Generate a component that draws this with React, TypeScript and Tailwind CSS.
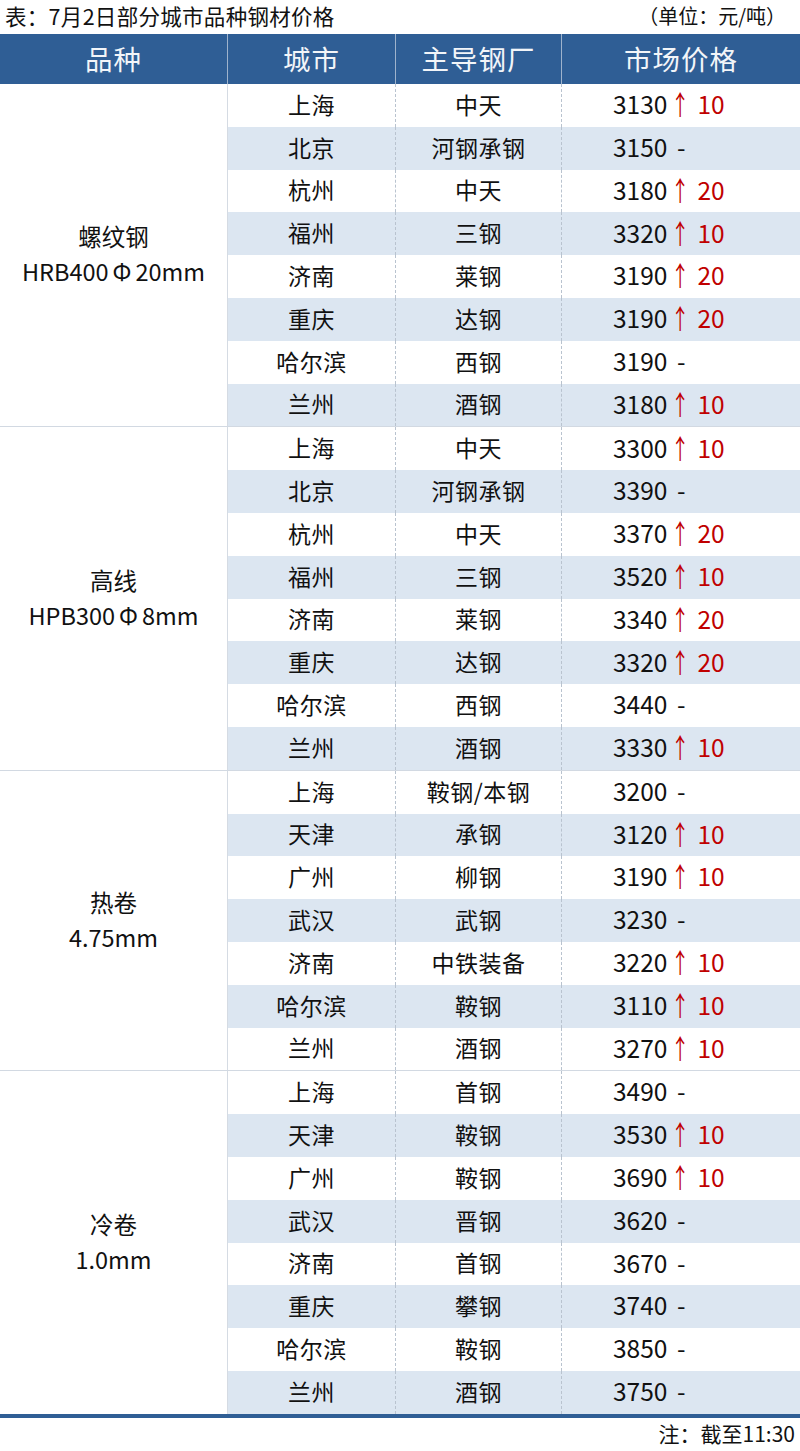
import React from 'react';

type Row = { city: string; mill: string; price: number; up?: number };
type Group = { name: string; spec: [string, string]; rows: Row[] };

const groups: Group[] = [
  {
    name: '螺纹钢',
    spec: ['HRB400', '20mm'],
    rows: [
      { city: '上海', mill: '中天', price: 3130, up: 10 },
      { city: '北京', mill: '河钢承钢', price: 3150 },
      { city: '杭州', mill: '中天', price: 3180, up: 20 },
      { city: '福州', mill: '三钢', price: 3320, up: 10 },
      { city: '济南', mill: '莱钢', price: 3190, up: 20 },
      { city: '重庆', mill: '达钢', price: 3190, up: 20 },
      { city: '哈尔滨', mill: '西钢', price: 3190 },
      { city: '兰州', mill: '酒钢', price: 3180, up: 10 },
    ],
  },
  {
    name: '高线',
    spec: ['HPB300', '8mm'],
    rows: [
      { city: '上海', mill: '中天', price: 3300, up: 10 },
      { city: '北京', mill: '河钢承钢', price: 3390 },
      { city: '杭州', mill: '中天', price: 3370, up: 20 },
      { city: '福州', mill: '三钢', price: 3520, up: 10 },
      { city: '济南', mill: '莱钢', price: 3340, up: 20 },
      { city: '重庆', mill: '达钢', price: 3320, up: 20 },
      { city: '哈尔滨', mill: '西钢', price: 3440 },
      { city: '兰州', mill: '酒钢', price: 3330, up: 10 },
    ],
  },
  {
    name: '热卷',
    spec: ['4.75mm', ''],
    rows: [
      { city: '上海', mill: '鞍钢/本钢', price: 3200 },
      { city: '天津', mill: '承钢', price: 3120, up: 10 },
      { city: '广州', mill: '柳钢', price: 3190, up: 10 },
      { city: '武汉', mill: '武钢', price: 3230 },
      { city: '济南', mill: '中铁装备', price: 3220, up: 10 },
      { city: '哈尔滨', mill: '鞍钢', price: 3110, up: 10 },
      { city: '兰州', mill: '酒钢', price: 3270, up: 10 },
    ],
  },
  {
    name: '冷卷',
    spec: ['1.0mm', ''],
    rows: [
      { city: '上海', mill: '首钢', price: 3490 },
      { city: '天津', mill: '鞍钢', price: 3530, up: 10 },
      { city: '广州', mill: '鞍钢', price: 3690, up: 10 },
      { city: '武汉', mill: '晋钢', price: 3620 },
      { city: '济南', mill: '首钢', price: 3670 },
      { city: '重庆', mill: '攀钢', price: 3740 },
      { city: '哈尔滨', mill: '鞍钢', price: 3850 },
      { city: '兰州', mill: '酒钢', price: 3750 },
    ],
  },
];

function DataRow({ row, striped }: { row: Row; striped: boolean }) {
  return (
    <div
      className={`flex h-[42.8px] items-center text-[23px] leading-none tracking-[0.5px] text-[#111] ${
        striped ? 'bg-[#dce6f1]' : 'bg-white'
      }`}
    >
      <div className="flex h-full w-[168px] items-center justify-center border-r border-dashed border-[#b9c3cf] pb-[2px]">
        {row.city}
      </div>
      <div className="flex h-full w-[166px] items-center justify-center border-r border-dashed border-[#b9c3cf] pb-[2px]">
        {row.mill}
      </div>
      <div className="flex h-full flex-1 items-center pb-[2px] pl-[51px] text-[24.5px] tracking-normal">
        <span className="w-[55px]">{row.price}</span>
        {row.up ? (
          <span className="text-[#c00000]">
            <span className="mr-[5px] inline-block scale-x-75 scale-y-110">↑</span>
            {row.up}
          </span>
        ) : (
          <span className="pl-[9px]">-</span>
        )}
      </div>
    </div>
  );
}

export default function App() {
  return (
    <div
      className="h-[1451px] w-[800px] overflow-hidden bg-white text-[#111]"
      style={{ fontFamily: '"Noto Sans CJK SC", "Noto Sans", sans-serif' }}
    >
      <div className="flex h-[34px] items-center justify-between pb-[2px] pl-[5px] pr-[14px] text-[21.5px] leading-none">
        <span className="tracking-[0.3px]">表：7月2日部分城市品种钢材价格</span>
        <span className="text-[20px]">（单位：元/吨）</span>
      </div>

      <div className="flex h-[50px] items-center bg-[#2f5e95] text-[27.5px] leading-none tracking-[1px] text-[#f2f5f9]">
        <div className="flex h-full w-[228px] items-center justify-center border-r border-[#9fb3cc]">品种</div>
        <div className="flex h-full w-[168px] items-center justify-center border-r border-[#9fb3cc]">城市</div>
        <div className="flex h-full w-[166px] items-center justify-center border-r border-[#9fb3cc]">主导钢厂</div>
        <div className="flex h-full flex-1 items-center justify-center">市场价格</div>
      </div>

      {groups.map((g, gi) => (
        <div key={g.name} className={`flex ${gi > 0 ? 'border-t-[1.5px] border-[#d2d9e2]' : ''}`}>
          <div className="flex w-[228px] flex-col items-center justify-center border-r border-[#d5dbe3] pb-[2px] text-[23.5px] leading-[35px]">
            <span>{g.name}</span>
            <span>
              {g.spec[1] ? (
                <>
                  {g.spec[0]}
                  <span className="mx-[4px]">Φ</span>
                  {g.spec[1]}
                </>
              ) : (
                g.spec[0]
              )}
            </span>
          </div>
          <div className="flex-1">
            {g.rows.map((r, ri) => (
              <DataRow key={ri} row={r} striped={ri % 2 === 1} />
            ))}
          </div>
        </div>
      ))}

      <div className="h-[4px] bg-[#2f5e95]" />
      <div className="flex justify-end pr-[5px] pt-[5px] text-[21px] leading-none">注：截至11:30</div>
    </div>
  );
}
